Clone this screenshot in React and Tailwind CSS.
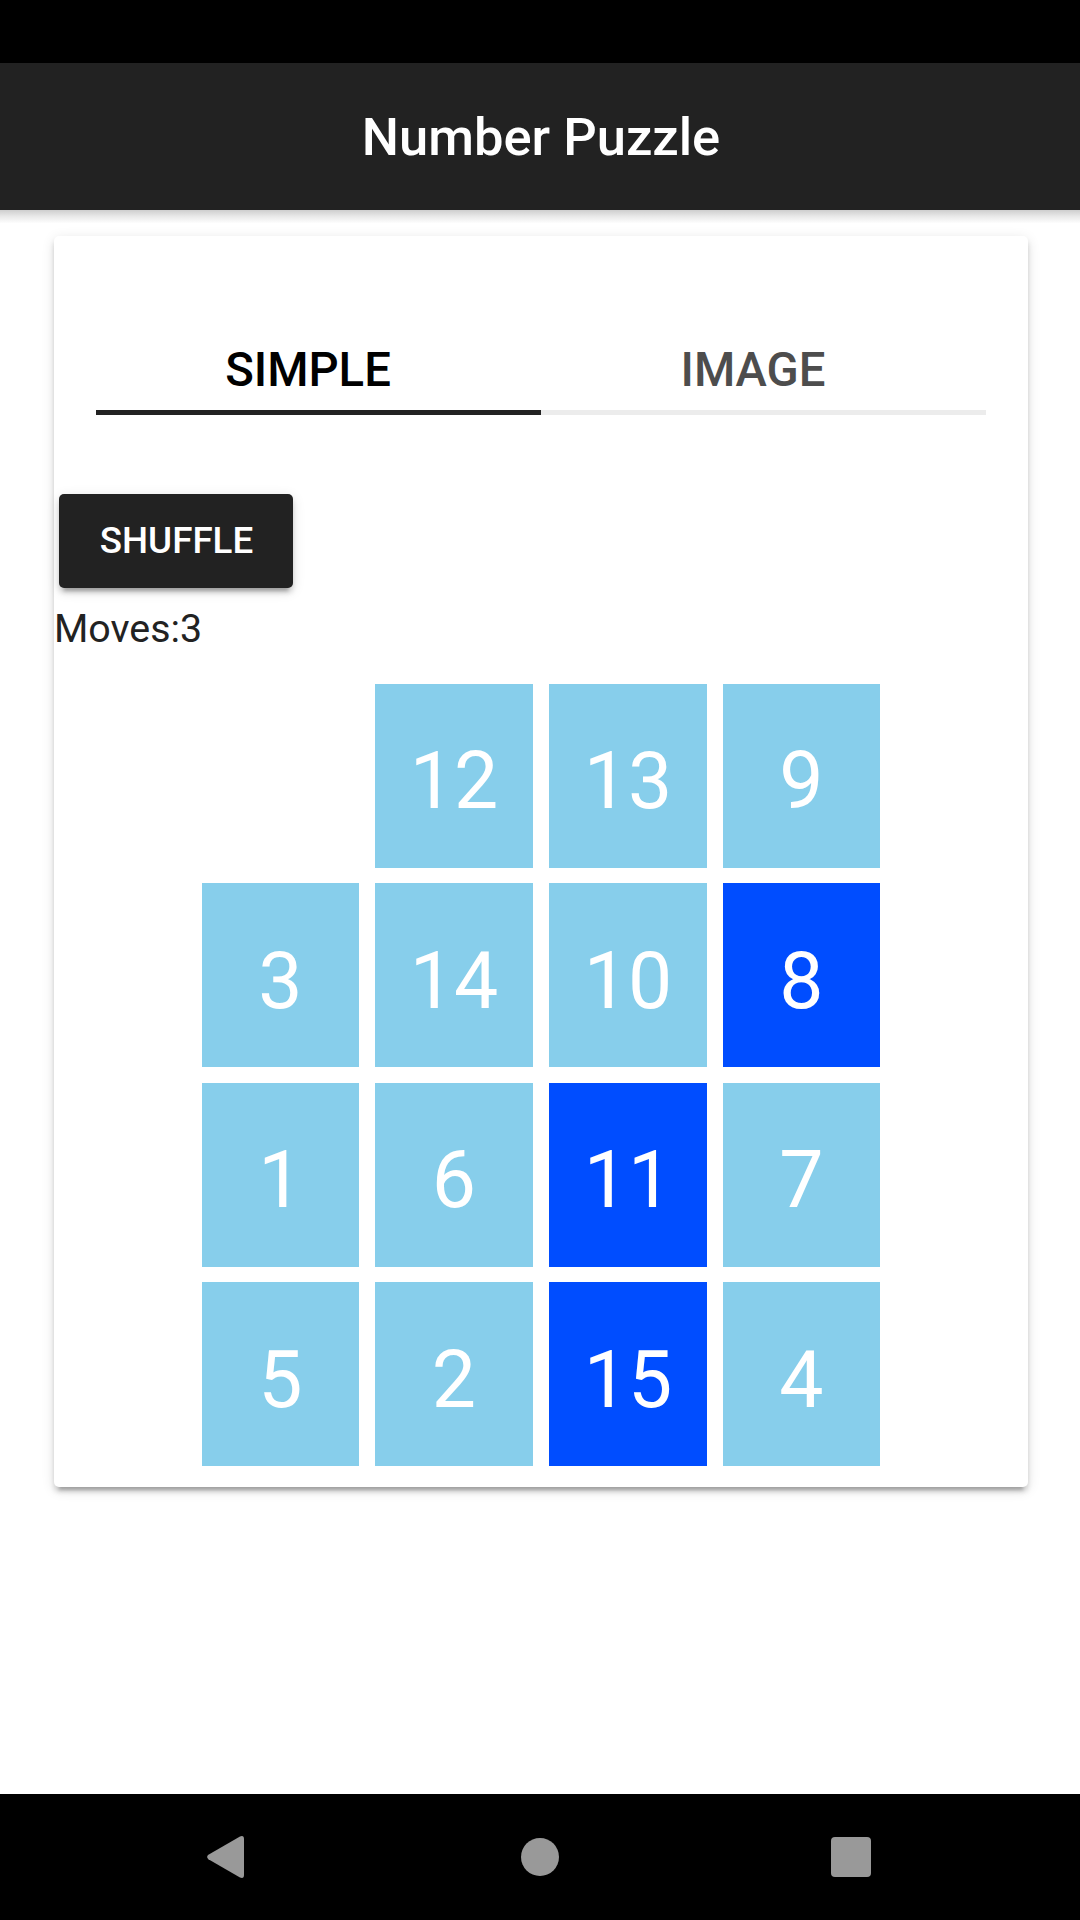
const rows = [
  [null, 12, 13, 9],
  [3, 14, 10, 8],
  [1, 6, 11, 7],
  [5, 2, 15, 4],
];

// Tiles that already sit in their solved position.
const placed = new Set([8, 11, 15]);

function Tab({ label, active }) {
  return (
    <div
      className={
        active
          ? "flex h-[85px] w-[445px] items-center justify-center border-b-[5px] border-[#222222] pt-[2px] pr-[21px] text-black"
          : "flex h-[85px] w-[445px] items-center justify-center border-b-[5px] border-[#ececec] pt-[2px] pr-[21px] text-[#4d4d4d]"
      }
    >
      <span className="text-[47.25px] leading-none font-medium">{label}</span>
    </div>
  );
}

function Tile({ value }) {
  if (value === null) return <div />;
  return (
    <div
      className={
        placed.has(value)
          ? "flex items-center justify-center bg-[#004dff] pt-[11.7px] text-[78.75px] leading-none text-white"
          : "flex items-center justify-center bg-[#87ceeb] pt-[11.7px] text-[78.75px] leading-none text-white"
      }
    >
      {value}
    </div>
  );
}

export default function App() {
  return (
    <div className="flex h-[1920px] w-[1080px] flex-col overflow-hidden bg-white font-['Roboto',sans-serif]">
      <div className="h-[63px] shrink-0 bg-black" />
      <header className="flex h-[147px] shrink-0 items-center justify-center bg-[#222222] pt-[2px] pl-[2px]">
        <h1 className="text-[52.5px] leading-none font-medium text-white">Number Puzzle</h1>
      </header>
      <div className="h-[13px] shrink-0 bg-linear-to-b from-[#cecece] via-[#e9e9e9] to-[#fdfdfd]" />

      <main className="flex-1 pt-[13px] pl-[54px]">
        <section className="h-[1251px] w-[974px] rounded-[5px] bg-white pt-[94px] shadow-[0_8px_3px_-5px_rgba(0,0,0,0.2),0_5px_5px_0_rgba(0,0,0,0.14),0_3px_13px_0_rgba(0,0,0,0.12)]">
          <div className="ml-[42px] flex w-[890px]">
            <Tab label="SIMPLE" active />
            <Tab label="IMAGE" />
          </div>

          <button className="mt-[79px] ml-[5px] flex h-[94px] w-[234px] items-center justify-center rounded-[5px] bg-[#222222] pl-px text-[36.75px] leading-none font-medium text-white shadow-[0_8px_3px_-5px_rgba(0,0,0,0.2),0_5px_5px_0_rgba(0,0,0,0.14),0_3px_13px_0_rgba(0,0,0,0.12)]">
            SHUFFLE
          </button>
          <p className="mt-[11px] text-[39.375px] leading-[59px] text-[#222222]">Moves:3</p>

          <div className="mt-[26px] ml-[148px] grid w-[678px] grid-cols-[157px_158px_158px_157px] grid-rows-[184px_184px_184px_184px] justify-between gap-y-[15.4px]">
            {rows.flat().map((value, i) => (
              <Tile key={i} value={value} />
            ))}
          </div>
        </section>
      </main>

      <nav className="flex h-[126px] shrink-0 items-center bg-black pl-[207px]">
        <svg width="38" height="42" viewBox="0 0 38 42" fill="#999999">
          <path d="M1.4 18.8 33 .5Q37 -1 37 3V39Q37 43 33 41.5L1.4 23.2Q-1.2 21 1.4 18.8Z" />
        </svg>
        <div className="ml-[276px] size-[38px] rounded-full bg-[#999999]" />
        <div className="ml-[272px] size-[40px] rounded-[4px] bg-[#999999]" />
      </nav>
    </div>
  );
}
